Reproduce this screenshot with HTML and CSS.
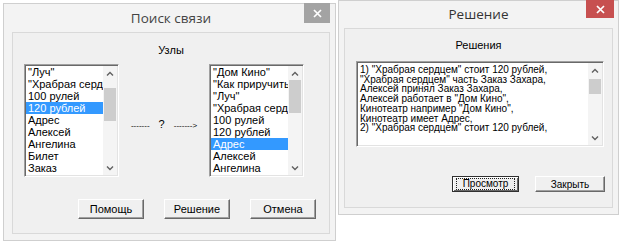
FILE: index.html
```html
<!DOCTYPE html>
<html lang="ru">
<head>
    <meta charset="UTF-8">
    <title>Поиск связи</title>
    <link rel="stylesheet" href="styles.css">
</head>
<body>

    <div class="desk">

        <div class="window win-search">
            <div class="titlebar">
                <span></span>
                <span class="title">Поиск связи</span>
                <span class="close-cell">
                    <button class="close">
                        <svg width="9" height="9" viewBox="0 0 9 9"><path d="M1 1 L8 8 M8 1 L1 8" stroke="#fff" stroke-width="1.7"/></svg>
                    </button>
                </span>
            </div>
            <div class="client">
                <div class="caption">Узлы</div>
                <div class="pick-row">
                    <div class="listbox">
                        <ul class="items">
                            <li>"Луч"</li>
                            <li>"Храбрая сердц</li>
                            <li>100 рулей</li>
                            <li class="selected">120 рублей</li>
                            <li>Адрес</li>
                            <li>Алексей</li>
                            <li>Ангелина</li>
                            <li>Билет</li>
                            <li>Заказ</li>
                            <li>Захара</li>
                        </ul>
                        <div class="scrollbar">
                            <div class="arrow"><svg width="8" height="5" viewBox="0 0 8 5"><path d="M1 4.5 L4 1.5 L7 4.5" fill="none" stroke="#606060" stroke-width="1.4"/></svg></div>
                            <div class="track"><div class="thumb thumb-low"></div></div>
                            <div class="arrow"><svg width="8" height="5" viewBox="0 0 8 5"><path d="M1 0.5 L4 3.5 L7 0.5" fill="none" stroke="#606060" stroke-width="1.4"/></svg></div>
                        </div>
                    </div>

                    <div class="link-sign"><span class="dash">-------</span><span class="ask">?</span><span class="dash">-------&gt;</span></div>

                    <div class="listbox">
                        <ul class="items">
                            <li>"Дом Кино"</li>
                            <li>"Как приручить ,</li>
                            <li>"Луч"</li>
                            <li>"Храбрая сердц</li>
                            <li>100 рулей</li>
                            <li>120 рублей</li>
                            <li class="selected">Адрес</li>
                            <li>Алексей</li>
                            <li>Ангелина</li>
                            <li>Билет</li>
                        </ul>
                        <div class="scrollbar">
                            <div class="arrow"><svg width="8" height="5" viewBox="0 0 8 5"><path d="M1 4.5 L4 1.5 L7 4.5" fill="none" stroke="#606060" stroke-width="1.4"/></svg></div>
                            <div class="track"><div class="thumb"></div></div>
                            <div class="arrow"><svg width="8" height="5" viewBox="0 0 8 5"><path d="M1 0.5 L4 3.5 L7 0.5" fill="none" stroke="#606060" stroke-width="1.4"/></svg></div>
                        </div>
                    </div>
                </div>
                <div class="actions">
                    <button class="btn">Помощь</button>
                    <button class="btn">Решение</button>
                    <button class="btn">Отмена</button>
                </div>
            </div>
        </div>

        <div class="window win-result">
            <div class="titlebar">
                <span></span>
                <span class="title">Решение</span>
                <span class="close-cell">
                    <button class="close close-active">
                        <svg width="9" height="9" viewBox="0 0 9 9"><path d="M1 1 L8 8 M8 1 L1 8" stroke="#fff" stroke-width="1.7"/></svg>
                    </button>
                </span>
            </div>
            <div class="client">
                <div class="caption">Решения</div>
                <div class="memo">
                    <div class="memo-text">
                        <div>1) "Храбрая сердцем" стоит 120 рублей,</div>
                        <div>"Храбрая сердцем" часть Заказ Захара,</div>
                        <div>Алексей принял Заказ Захара,</div>
                        <div>Алексей работает в "Дом Кино",</div>
                        <div>Кинотеатр например "Дом Кино",</div>
                        <div>Кинотеатр имеет Адрес,</div>
                        <div>2) "Храбрая сердцем" стоит 120 рублей,</div>
                    </div>
                    <div class="scrollbar">
                        <div class="arrow"><svg width="8" height="5" viewBox="0 0 8 5"><path d="M1 4.5 L4 1.5 L7 4.5" fill="none" stroke="#606060" stroke-width="1.4"/></svg></div>
                        <div class="track"><div class="thumb thumb-small"></div></div>
                        <div class="arrow"><svg width="8" height="5" viewBox="0 0 8 5"><path d="M1 0.5 L4 3.5 L7 0.5" fill="none" stroke="#606060" stroke-width="1.4"/></svg></div>
                    </div>
                </div>
                <div class="actions">
                    <button class="btn btn-default"><span class="focus">Просмотр</span></button>
                    <button class="btn">Закрыть</button>
                </div>
            </div>
        </div>

    </div>

</body>
</html>
```

FILE: styles.css
```css
body {
    margin: 0;
    background-color: #ffffff;
    font-family: "Liberation Sans", Arial, sans-serif;
    color: #000000;
}

.desk {
    display: flex;
    align-items: flex-start;
    gap: 2px;
    padding-left: 3px;
}

.window {
    display: flex;
    flex-direction: column;
    background-color: #f3f3f3;
    border: 1px solid #cfcfcf;
    box-sizing: border-box;
}

.win-search {
    width: 333px;
    height: 238px;
    margin-top: 3px;
    padding: 0 5px 6px 8px;
}

.win-result {
    width: 281px;
    height: 215px;
    padding: 0 5px 6px 5px;
}

.titlebar {
    display: grid;
    grid-template-columns: 1fr auto 1fr;
    height: 28px;
}

.win-result .titlebar {
    height: 27px;
}

.title {
    font-family: "Open Sans", "Noto Sans", sans-serif;
    font-size: 13.5px;
    line-height: 28px;
    color: #444444;
    white-space: nowrap;
}

.win-result .title {
    line-height: 27px;
    color: #333333;
}

.close-cell {
    display: flex;
    justify-content: flex-end;
    align-items: flex-start;
}

.close {
    width: 26px;
    height: 20px;
    margin-top: -1px;
    border: none;
    padding: 0;
    background-color: #a3a3a3;
    display: flex;
    align-items: center;
    justify-content: center;
}

.close-active {
    width: 28px;
    height: 18px;
    margin-right: -1px;
    background-color: #c75050;
}

.client {
    flex: 1;
    display: flex;
    flex-direction: column;
    background-color: #f0f0f0;
    border: 1px solid #d9d9d9;
}

.caption {
    text-align: center;
    font-size: 11px;
    line-height: 12px;
    margin: 11px 0 8px;
}

.win-result .caption {
    margin: 10px 0 10px;
}

.pick-row {
    display: flex;
    align-items: center;
    padding-left: 11px;
}

.listbox {
    display: grid;
    grid-template-columns: 1fr 14px;
    width: 95px;
    height: 113px;
    box-sizing: border-box;
    background-color: #ffffff;
    border: 1px solid;
    border-color: #a0a0a0 #ffffff #ffffff #a0a0a0;
    box-shadow: inset 1px 1px 0 #696969, inset -1px -1px 0 #e3e3e3;
    padding: 1px 1px 1px 1px;
}

.items {
    list-style: none;
    margin: 0;
    padding: 0;
    overflow: hidden;
    font-size: 11px;
    line-height: 12px;
}

.items li {
    padding-left: 2px;
    white-space: nowrap;
    overflow: hidden;
}

.items li.selected {
    background-color: #3399ff;
    color: #ffffff;
}

.scrollbar {
    display: flex;
    flex-direction: column;
    background-color: #f4f4f4;
}

.arrow {
    height: 14px;
    display: flex;
    align-items: center;
    justify-content: center;
}

.track {
    flex: 1;
    padding: 0 1px;
}

.thumb {
    height: 33px;
    background-color: #cdcdcd;
}

.thumb-low {
    margin-top: 8px;
}

.thumb-small {
    height: 15px;
    margin-top: 2px;
}

.link-sign {
    display: flex;
    align-items: baseline;
    justify-content: center;
    gap: 9px;
    width: 64px;
    margin: 0 13px;
    font-size: 11px;
    white-space: nowrap;
    padding-top: 6px;
}

.dash {
    font-size: 8px;
}

.actions {
    display: flex;
    justify-content: flex-end;
    gap: 20px;
    margin-top: 22px;
    padding-right: 13px;
}

.btn {
    width: 66px;
    height: 20px;
    padding: 0;
    font-family: "Liberation Sans", Arial, sans-serif;
    font-size: 11px;
    color: #000000;
    background-color: #f0f0f0;
    border: 1px solid;
    border-color: #ffffff #696969 #696969 #ffffff;
    box-shadow: inset -1px -1px 0 #a0a0a0;
}

.win-result .actions {
    gap: 16px;
    margin-top: 29px;
    padding-right: 7px;
}

.win-result .btn {
    width: 70px;
    height: 16px;
    font-size: 10px;
}

.win-result .btn-default {
    width: 67px;
    border: 1px solid #303030;
    box-shadow: inset 1px 1px 0 #ffffff, inset -1px -1px 0 #696969;
    display: flex;
    align-items: center;
    justify-content: center;
}

.focus {
    border: 1px dotted #202020;
    padding: 0 6px;
    line-height: 10px;
}

.memo {
    display: grid;
    grid-template-columns: 1fr 14px;
    height: 86px;
    margin: 0 8px 0 11px;
    box-sizing: border-box;
    background-color: #ffffff;
    border: 1px solid;
    border-color: #a0a0a0 #ffffff #ffffff #a0a0a0;
    box-shadow: inset 1px 1px 0 #696969, inset -1px -1px 0 #e3e3e3;
    padding: 1px;
}

.memo-text {
    font-size: 10px;
    line-height: 9.7px;
    padding: 2px 0 0 2px;
    white-space: nowrap;
    overflow: hidden;
}
```
